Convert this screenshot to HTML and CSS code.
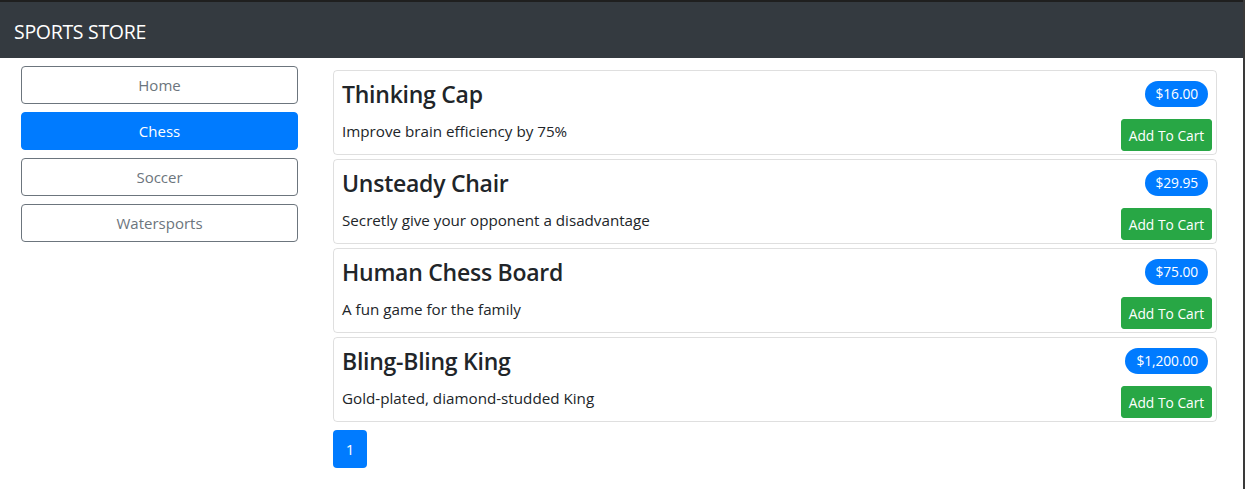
FILE: index.html
```html
<!DOCTYPE html>
<html>
<head>
<meta charset="utf-8">
<link rel="stylesheet" href="styles.css">
</head>
<body>
<div class="frame">
  <div class="topline"></div>
  <nav class="navbar"><span class="brand">SPORTS STORE</span></nav>
  <div class="layout">
    <aside class="sidebar">
      <a class="cat">Home</a>
      <a class="cat active">Chess</a>
      <a class="cat">Soccer</a>
      <a class="cat">Watersports</a>
    </aside>
    <main class="products">
      <div class="card">
        <div class="card-title"><h4>Thinking Cap</h4><span class="badge">$16.00</span></div>
        <div class="card-text"><span>Improve brain efficiency by 75%</span><button class="btn-cart">Add To Cart</button></div>
      </div>
      <div class="card">
        <div class="card-title"><h4>Unsteady Chair</h4><span class="badge">$29.95</span></div>
        <div class="card-text"><span>Secretly give your opponent a disadvantage</span><button class="btn-cart">Add To Cart</button></div>
      </div>
      <div class="card">
        <div class="card-title"><h4>Human Chess Board</h4><span class="badge">$75.00</span></div>
        <div class="card-text"><span>A fun game for the family</span><button class="btn-cart">Add To Cart</button></div>
      </div>
      <div class="card">
        <div class="card-title"><h4>Bling-Bling King</h4><span class="badge">$1,200.00</span></div>
        <div class="card-text"><span>Gold-plated, diamond-studded King</span><button class="btn-cart">Add To Cart</button></div>
      </div>
      <div class="pager"><button class="page active">1</button></div>
    </main>
  </div>
</div>
</body>
</html>
```
FILE: styles.css
```css
html, body {
  margin: 0;
  padding: 0;
  background: #fff;
}
body {
  font-family: "Open Sans", "Noto Sans", sans-serif;
  color: #212529;
  font-size: 16px;
}
.frame {
  min-height: 489px;
  border-right: 2px solid #3a3a3a;
  box-sizing: border-box;
}
.topline {
  height: 2px;
  background: #1f1f1f;
}
.navbar {
  height: 56px;
  background: #343a40;
  display: flex;
  align-items: center;
  padding: 2px 14px 0;
  box-sizing: border-box;
}
.brand {
  color: #fff;
  font-size: 19.5px;
  letter-spacing: -0.3px;
}
.layout {
  display: flex;
  padding-left: 21px;
  gap: 35px;
}
.sidebar {
  width: 277px;
  margin-top: 8px;
  display: flex;
  flex-direction: column;
  gap: 8px;
}
.cat {
  display: block;
  height: 38px;
  line-height: 36px;
  box-sizing: border-box;
  border: 1px solid #6c757d;
  border-radius: 4px;
  color: #6c757d;
  text-align: center;
  font-size: 15px;
}
.cat.active {
  background: #007bff;
  border-color: #007bff;
  color: #fff;
}
.products {
  width: 884px;
  margin-top: 12px;
}
.card {
  border: 1px solid rgba(0,0,0,0.125);
  border-radius: 4px;
  padding: 4px;
  margin-bottom: 4px;
  height: 85px;
  box-sizing: border-box;
}
.card-title {
  margin: 4px 4px 7px 4px;
  height: 29px;
  display: flex;
  align-items: center;
  justify-content: space-between;
}
.card-title h4 {
  margin: 0;
  padding-top: 2px;
  font-size: 23px;
  font-weight: 600;
  letter-spacing: -0.25px;
  line-height: 29px;
}
.badge {
  background: #007bff;
  color: #fff;
  font-size: 13.8px;
  height: 26px;
  line-height: 26px;
  padding: 0 10px 0 11px;
  border-radius: 13px;
  letter-spacing: -0.1px;
}
.card-text {
  padding: 4px 0 0 4px;
  display: flex;
  justify-content: space-between;
  align-items: flex-start;
  font-size: 15.2px;
  line-height: 24px;
}
.btn-cart {
  font-family: inherit;
  background: #28a745;
  color: #fff;
  border: 1px solid #28a745;
  border-radius: 3px;
  font-size: 13.8px;
  height: 32px;
  width: 91px;
  padding: 0;
}
.pager {
  margin-top: 8px;
  display: flex;
}
.page {
  font-family: inherit;
  width: 34px;
  height: 38px;
  border: 0;
  border-radius: 4px;
  background: #007bff;
  color: #fff;
  font-size: 15px;
  padding: 0;
}
```
